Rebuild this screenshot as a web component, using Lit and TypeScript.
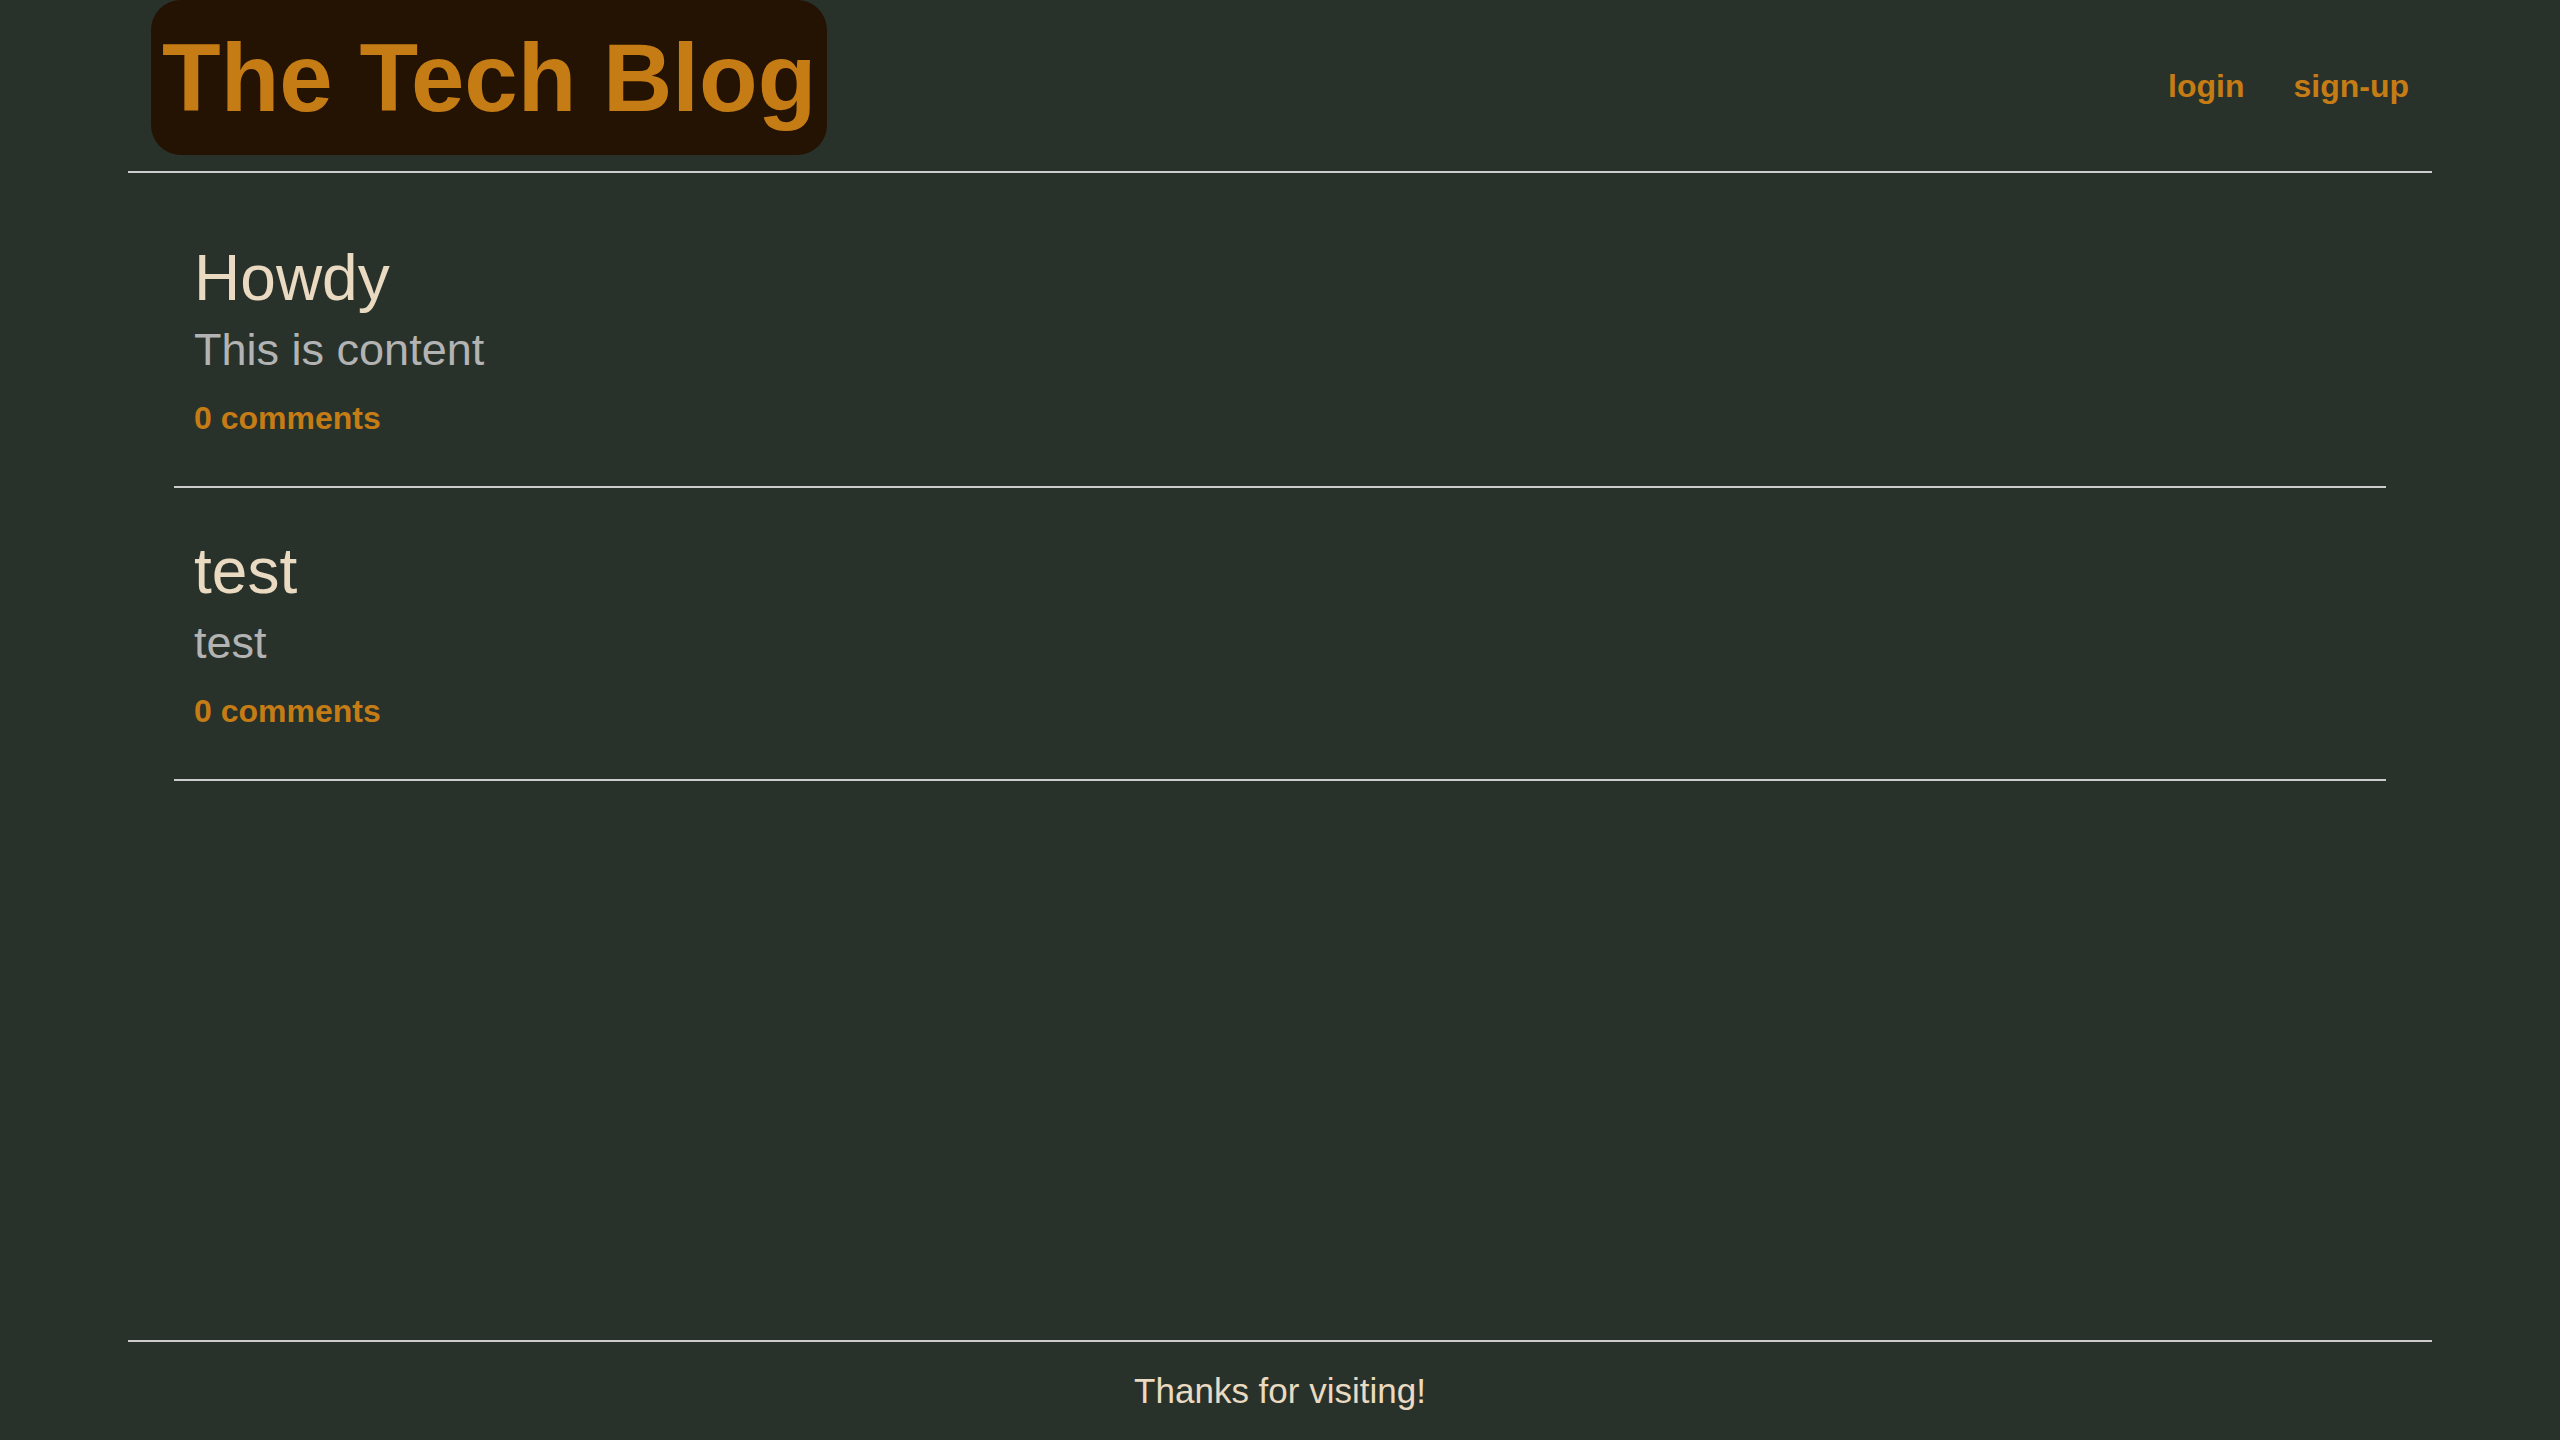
import { LitElement, html, css } from "lit";
import { customElement, property, state } from "lit/decorators.js";

interface Post {
  id: number;
  title: string;
  content: string;
  comments: number;
}

@customElement("blog-post")
export class BlogPost extends LitElement {
  @property({ attribute: false }) post!: Post;

  static styles = css`
    :host {
      display: block;
    }
    .post {
      padding: 46px 20px 49px;
      border-bottom: 2px solid #cccccc;
    }
    .title {
      margin: 0 0 9px;
      font-size: 64px;
      line-height: 74px;
      font-weight: 400;
    }
    .title a {
      color: #e9dac1;
      text-decoration: none;
    }
    .content {
      margin: 0 0 23px;
      font-size: 45px;
      line-height: 52px;
      color: #b3b3b3;
    }
    .comments {
      display: block;
      width: fit-content;
      font-size: 32px;
      line-height: 38px;
      font-weight: 700;
      color: #c67c15;
      text-decoration: none;
    }
  `;

  render() {
    const { id, title, content, comments } = this.post;
    return html`
      <article class="post">
        <h2 class="title"><a href="#/post/${id}">${title}</a></h2>
        <p class="content">${content}</p>
        <a class="comments" href="#/post/${id}">${comments} comments</a>
      </article>
    `;
  }
}

@customElement("app-root")
export class AppRoot extends LitElement {
  @state() private posts: Post[] = [
    { id: 1, title: "Howdy", content: "This is content", comments: 0 },
    { id: 2, title: "test", content: "test", comments: 0 },
  ];

  static styles = css`
    :host {
      display: block;
      background: #28322b;
      color: #e9dac1;
      font-family: Arial, "Liberation Sans", sans-serif;
    }
    .page {
      display: flex;
      flex-direction: column;
      box-sizing: border-box;
      width: 90%;
      min-height: 100vh;
      margin: 0 auto;
    }
    .header {
      border-bottom: 2px solid #cccccc;
    }
    .bar {
      display: flex;
      flex-wrap: wrap;
      align-items: center;
      justify-content: space-between;
      padding: 0 1%;
    }
    .brand {
      margin: 0 0 16px;
      padding: 0 11px;
      border-radius: 30px;
      background: #241302;
      font-size: 96px;
      line-height: 155px;
      font-weight: 700;
    }
    .brand a,
    .nav a {
      color: #c67c15;
      text-decoration: none;
    }
    .nav {
      display: flex;
      gap: 49px;
      font-size: 32px;
      line-height: 38px;
      font-weight: 700;
    }
    .main {
      flex: 1;
      padding: 22px 2%;
    }
    .footer {
      padding: 29px 0;
      border-top: 2px solid #cccccc;
      font-size: 35px;
      line-height: 40px;
      text-align: center;
    }
  `;

  render() {
    return html`
      <div class="page">
        <header class="header">
          <div class="bar">
            <h1 class="brand"><a href="#/">The Tech Blog</a></h1>
            <nav class="nav">
              <a href="#/login">login</a>
              <a href="#/signup">sign-up</a>
            </nav>
          </div>
        </header>
        <main class="main">
          ${this.posts.map((post) => html`<blog-post .post=${post}></blog-post>`)}
        </main>
        <footer class="footer">Thanks for visiting!</footer>
      </div>
    `;
  }
}
